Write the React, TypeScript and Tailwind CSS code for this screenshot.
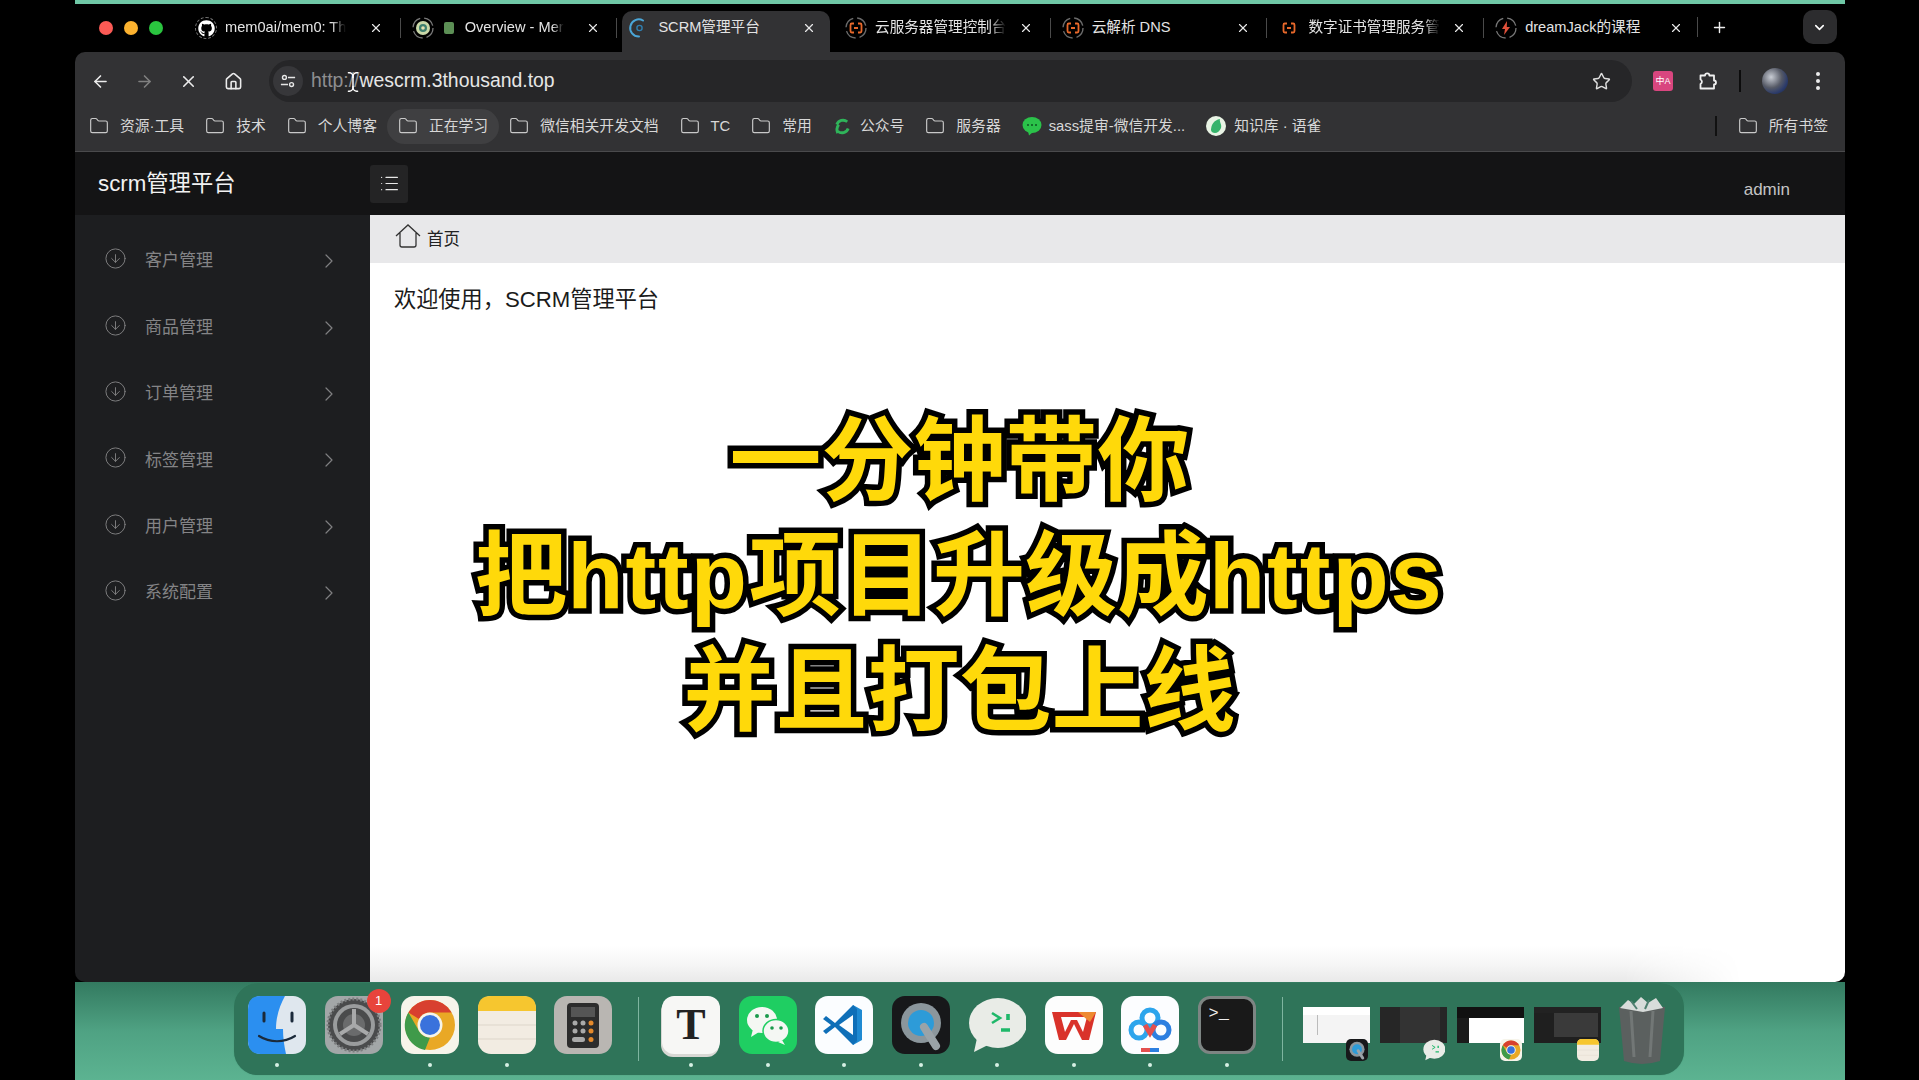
import {
  ArrowLeft,
  ArrowRight,
  ChevronDown,
  ChevronRight,
  CircleArrowDown,
  Folder,
  Home,
  List,
  Plus,
  Star,
  TextCursor,
  X,
} from 'lucide-react';
import { FaGithub } from 'react-icons/fa';

function AliIcon({ ring = true }: { ring?: boolean }) {
  return (
    <svg viewBox="0 0 22 22" className="w-[22px] h-[22px]" fill="none">
      {ring && <circle cx="11" cy="11" r="10" stroke="#6b6b6b" strokeWidth="1.4" strokeDasharray="12 4" />}
      <path d="M9 6.5H6.8Q5.5 6.5 5.5 8v6q0 1.5 1.3 1.5H9M13 6.5h2.2q1.3 0 1.3 1.5v6q0 1.5-1.3 1.5H13M9 11h4" stroke="#e8682a" strokeWidth="1.8" />
    </svg>
  );
}

function GithubFav() {
  return (
    <span className="relative flex w-[22px] h-[22px] items-center justify-center rounded-full border border-dashed border-[#777]">
      <FaGithub className="w-[17px] h-[17px] text-white" />
    </span>
  );
}

function OverviewFav() {
  return (
    <svg viewBox="0 0 22 22" className="w-[22px] h-[22px]" fill="none">
      <circle cx="11" cy="11" r="10" stroke="#777" strokeWidth="1.3" strokeDasharray="12 4" />
      <circle cx="11" cy="11" r="7" fill="#c9d8a8" />
      <circle cx="11" cy="11" r="4" fill="#3d7f6e" />
      <circle cx="11" cy="11" r="1.8" fill="#e6e2b0" />
    </svg>
  );
}

function ScrmFav() {
  return (
    <svg viewBox="0 0 22 22" className="w-[22px] h-[22px]" fill="none">
      <path d="M15 3.5A8.6 8.6 0 1 0 11 19.6" stroke="#4aa6d8" strokeWidth="2" strokeLinecap="round" />
      <circle cx="11.5" cy="11" r="2.6" stroke="#2f7fb0" strokeWidth="1.4" />
    </svg>
  );
}

function JackFav() {
  return (
    <svg viewBox="0 0 22 22" className="w-[22px] h-[22px]" fill="none">
      <circle cx="11" cy="11" r="10" stroke="#777" strokeWidth="1.3" strokeDasharray="12 4" />
      <path d="M12 4 7 12h3l-1 6 6-8h-3.2z" fill="#e0503a" />
    </svg>
  );
}

const tabs = [
  { title: 'mem0ai/mem0: Th', icon: <GithubFav />, fade: true },
  { title: 'Overview - Mer', icon: <OverviewFav />, emoji: true, fade: true },
  { title: 'SCRM管理平台', icon: <ScrmFav />, active: true },
  { title: '云服务器管理控制台', icon: <AliIcon />, fade: true },
  { title: '云解析 DNS', icon: <AliIcon /> },
  { title: '数字证书管理服务管', icon: <AliIcon ring={false} />, fade: true },
  { title: 'dreamJack的课程', icon: <JackFav />, last: true },
];

const bookmarks = ['资源·工具', '技术', '个人博客', '正在学习', '微信相关开发文档', 'TC', '常用'];
const menus = ['客户管理', '商品管理', '订单管理', '标签管理', '用户管理', '系统配置'];

function Bookmark({ label, active }: { label: string; active?: boolean }) {
  return (
    <div className={`flex h-[35px] items-center gap-[11px] rounded-full ${active ? 'bg-[#3f3f41] -mx-[11px] px-[11px]' : ''}`}>
      <Folder className="w-[20px] h-[20px] text-[#c9c9c9]" strokeWidth={1.4} />
      <span className="whitespace-nowrap text-[14.8px] text-[#d8d8d8]">{label}</span>
    </div>
  );
}

function FinderIcon() {
  return (
    <svg viewBox="0 0 58 58" className="w-full h-full">
      <rect width="58" height="58" rx="13" fill="#dfe7ee" />
      <path d="M13 0h24c-5 9-9 20-9 33h7c0 8 1 16 3 25H13Q0 58 0 45V13Q0 0 13 0z" fill="#2b8ff0" />
      <path d="M16 17v8M44 17v8" stroke="#1b2a3a" strokeWidth="3" strokeLinecap="round" />
      <path d="M11 40c11 7 25 7 36 0" fill="none" stroke="#1b2a3a" strokeWidth="2.2" strokeLinecap="round" />
    </svg>
  );
}

function SettingsIcon() {
  return (
    <svg viewBox="0 0 58 58" className="w-full h-full">
      <rect width="58" height="58" rx="13" fill="#a3a7a8" />
      <circle cx="29" cy="29" r="26" fill="#4a4b4c" />
      <circle cx="29" cy="29" r="26" fill="none" stroke="#7c7e7f" strokeWidth="3" strokeDasharray="2 2" />
      <circle cx="29" cy="29" r="21" fill="#9a9c9d" />
      <circle cx="29" cy="29" r="17" fill="#4a4b4c" />
      <circle cx="29" cy="29" r="11" fill="#6a6b6c" />
      <path d="M29 29V13M29 29 15 38M29 29l14 9" stroke="#a8a9aa" strokeWidth="4" />
    </svg>
  );
}

function ChromeIcon() {
  return (
    <svg viewBox="0 0 58 58" className="w-full h-full">
      <rect width="58" height="58" rx="13" fill="#f6f4ea" />
      <circle cx="29" cy="29" r="25" fill="#e9a825" />
      <path d="M29 4a25 25 0 0 1 21.6 12.5H29A12.5 12.5 0 0 0 18 23L7.400 16.500A25 25 0 0 1 29 4z" fill="#d8402f" />
      <path d="M7.400 16.500 18 35a12.500 12.500 0 0 0 11 6.500L24 54A25 25 0 0 1 7.400 16.500z" fill="#3f9a4a" />
      <circle cx="29" cy="29" r="12.500" fill="#f6f4ea" />
      <circle cx="29" cy="29" r="10" fill="#3a72dc" />
    </svg>
  );
}

function NotesIcon() {
  return (
    <svg viewBox="0 0 58 58" className="w-full h-full">
      <rect width="58" height="58" rx="13" fill="#f2ece2" />
      <path d="M0 15V13Q0 0 13 0h32q13 0 13 13v2z" fill="#f6c62f" />
      <path d="M0 29h58M0 43h58" stroke="#ddd6ca" strokeWidth="1" />
    </svg>
  );
}

function CalcIcon() {
  const keys = [0, 1, 2];
  return (
    <svg viewBox="0 0 58 58" className="w-full h-full">
      <rect width="58" height="58" rx="13" fill="#b9b6b2" />
      <rect x="13" y="7" width="32" height="45" rx="4" fill="#2c2c2c" />
      <rect x="17" y="11" width="24" height="10" fill="#555" />
      {keys.map((k) => (
        <g key={k}>
          <circle cx={21 + k * 8} cy="27" r="2.500" fill={k === 2 ? '#e58a2c' : '#aaa'} />
          <circle cx={21 + k * 8} cy="35" r="2.500" fill={k === 2 ? '#e58a2c' : '#aaa'} />
        </g>
      ))}
      <rect x="18" y="41" width="13" height="5" rx="2.500" fill="#aaa" />
      <circle cx="37" cy="43.500" r="2.500" fill="#e58a2c" />
    </svg>
  );
}

function WechatIcon() {
  return (
    <svg viewBox="0 0 58 58" className="w-full h-full">
      <rect width="58" height="58" rx="13" fill="#1fce62" />
      <ellipse cx="23" cy="24" rx="15" ry="13" fill="#f4f7f3" />
      <path d="M14 33 12 41l8-5z" fill="#f4f7f3" />
      <ellipse cx="37" cy="35" rx="13" ry="11.500" fill="#f4f7f3" stroke="#1fce62" strokeWidth="1.500" />
      <path d="M43 44l3 5-7-3z" fill="#f4f7f3" />
      <circle cx="18" cy="20" r="2" fill="#1a9a4c" />
      <circle cx="28" cy="20" r="2" fill="#1a9a4c" />
      <circle cx="33" cy="32" r="1.800" fill="#1a9a4c" />
      <circle cx="42" cy="32" r="1.800" fill="#1a9a4c" />
    </svg>
  );
}

function VscodeIcon() {
  return (
    <svg viewBox="0 0 58 58" className="w-full h-full">
      <rect width="58" height="58" rx="13" fill="#fbfdff" />
      <path d="M38 9 47 14v30l-9 5V9z" fill="#1f8ad2" />
      <path d="M38 9 20 27 11 20l-3 3 8 6-8 6 3 3 9-7 18 18 4-4V13z" fill="#0f6fb8" />
      <path d="M38 19v20L24 29z" fill="#fbfdff" />
    </svg>
  );
}

function QuicktimeIcon() {
  return (
    <svg viewBox="0 0 58 58" className="w-full h-full">
      <rect width="58" height="58" rx="13" fill="#17181a" />
      <circle cx="29" cy="27" r="20" fill="#8b969c" />
      <circle cx="29" cy="27" r="13" fill="#2d9bd8" />
      <path d="M32 31 44 50" stroke="#9aa3a8" strokeWidth="8" strokeLinecap="round" />
    </svg>
  );
}

function ChatIcon() {
  return (
    <svg viewBox="0 0 58 58" className="w-full h-full">
      <ellipse cx="30" cy="27" rx="29" ry="25" fill="#e9ece7" />
      <path d="M9 42 6 56l16-8z" fill="#e9ece7" />
      <path d="M24 17l8 5-8 5" fill="none" stroke="#1fb86a" strokeWidth="2.600" />
      <path d="M40 18v6M33 34h9" stroke="#1fb86a" strokeWidth="3.600" />
    </svg>
  );
}

function WpsIcon() {
  return (
    <svg viewBox="0 0 58 58" className="w-full h-full">
      <rect width="58" height="58" rx="13" fill="#fdfdfd" />
      <path d="M7 16h44l-7 28h-7l-8-16-8 16h-7z" fill="#d9322a" />
      <path d="M16 21h26l-4 15-6-12h-6l-6 12z" fill="#fdfdfd" />
      <path d="M33 16h18l-6 10z" fill="#ee8a30" />
    </svg>
  );
}

function BaiduIcon() {
  return (
    <svg viewBox="0 0 58 58" className="w-full h-full">
      <rect width="58" height="58" rx="13" fill="#fcfdff" />
      <circle cx="29" cy="22" r="8" fill="none" stroke="#2da5ec" strokeWidth="5" />
      <circle cx="18" cy="34" r="8" fill="none" stroke="#2da5ec" strokeWidth="5" />
      <circle cx="40" cy="34" r="8" fill="none" stroke="#2d7fe0" strokeWidth="5" />
      <path d="M24 29l5 8 5-8" fill="none" stroke="#e4504f" strokeWidth="5" />
      <rect x="20" y="52" width="9" height="4" fill="#e4504f" />
      <rect x="29" y="52" width="9" height="4" fill="#2d7fe0" />
    </svg>
  );
}

function TrashIcon() {
  return (
    <svg viewBox="0 0 54 70" className="w-full h-full">
      <path d="M4 12h46l-5 54q-18 6-36 0z" fill="#5b605f" />
      <path d="M16 16l3 46M38 16l-3 46" stroke="#727776" strokeWidth="3" />
      <path d="M5 13l8-8 6 4 7-7 7 6 8-5 7 10-20 4z" fill="#d8dcda" />
      <path d="M16 6l6 8M34 5l-4 9" stroke="#4f7f70" strokeWidth="2" />
    </svg>
  );
}

function DockApp({ running = true, children }: { running?: boolean; children: React.ReactNode }) {
  return (
    <div className="relative h-[58px] w-[58px] shrink-0">
      {children}
      {running && <span className="absolute left-[27px] top-[67px] h-[4px] w-[4px] rounded-full bg-[#d6f0e4]" />}
    </div>
  );
}

function Thumb({ top, left, badge, children }: { top: string; left: string; badge: React.ReactNode; children?: React.ReactNode }) {
  return (
    <div className="relative h-[50px] w-[67px] shrink-0">
      <div className={`h-[36px] w-full overflow-hidden ${top}`}>
        <div className={`h-full ${left}`}>{children}</div>
      </div>
      <div className="absolute right-[2px] top-[29px] h-[28px] w-[22px]">{badge}</div>
    </div>
  );
}

export default function App() {
  return (
    <div className="relative flex h-[1080px] w-[1919px] overflow-hidden bg-black [font-family:'Liberation_Sans','Noto_Sans_CJK_SC',sans-serif]">
      <div className="ml-[75px] flex w-[1770px] flex-col">
        <div className="h-[4px] shrink-0 bg-[#6fc7a6]" />

        {/* browser window */}
        <div className="relative z-10 flex h-[978px] shrink-0 flex-col overflow-hidden rounded-[10px] bg-black">
          {/* tabs */}
          <div className="flex h-[48px] shrink-0 items-end pl-[24px]">
            <div className="mb-[17px] flex gap-[11px]">
              <span className="h-[14px] w-[14px] rounded-full bg-[#fb5a55]" />
              <span className="h-[14px] w-[14px] rounded-full bg-[#fcb22f]" />
              <span className="h-[14px] w-[14px] rounded-full bg-[#2ac43f]" />
            </div>
            <div className="ml-[26px] flex">
              {tabs.map((tab) => (
                <div
                  key={tab.title}
                  className={`relative flex h-[41px] shrink-0 items-center pb-[7px] pl-[6px] ${tab.active ? 'mr-[9px] w-[207.7px] rounded-t-[10px] bg-[#323234]' : 'w-[216.7px]'}`}
                >
                  <div className="flex h-[22px] w-[22px] shrink-0 items-center justify-center">{tab.icon}</div>
                  {tab.emoji && <span className="ml-[10px] h-[12px] w-[10px] shrink-0 rounded-[2px] bg-[#5c8f55]" />}
                  <span
                    className={`${tab.emoji ? 'ml-[11px]' : 'ml-[8px]'} whitespace-nowrap text-[14.6px] text-[#e4e4e4] ${tab.fade ? '[mask-image:linear-gradient(to_right,black_88%,transparent)]' : ''}`}
                  >
                    {tab.title}
                  </span>
                  <X className="absolute left-[180px] top-[10px] h-[14px] w-[14px] text-[#e8e8e8]" strokeWidth={2} />
                  {!tab.active && !tab.last && <span className="absolute right-[5px] top-[7px] h-[20px] w-px bg-[#4a4a4a]" />}
                </div>
              ))}
            </div>
            <div className="mb-[9px] flex h-[32px] items-center">
              <span className="-ml-[9px] h-[20px] w-px bg-[#4a4a4a]" />
              <Plus className="ml-[13px] h-[17px] w-[17px] text-[#eee]" strokeWidth={2} />
              <div className="ml-[75px] flex h-[34px] w-[34px] items-center justify-center rounded-[10px] bg-[#2c2c2e]">
                <ChevronDown className="h-[15px] w-[15px] text-white" strokeWidth={2.5} />
              </div>
            </div>
          </div>

          {/* toolbar */}
          <div className="flex h-[58px] shrink-0 items-center rounded-t-[10px] bg-[#323234] pl-[16px]">
            <ArrowLeft className="h-[19px] w-[19px] text-[#ececec]" strokeWidth={2} />
            <ArrowRight className="ml-[25px] h-[19px] w-[19px] text-[#808080]" strokeWidth={2} />
            <X className="ml-[25px] h-[19px] w-[19px] text-[#ececec]" strokeWidth={2} />
            <Home className="ml-[26px] h-[19px] w-[19px] text-[#ececec]" strokeWidth={2} />
            <div className="ml-[26px] flex h-[42px] w-[1363px] items-center rounded-full bg-[#262628] pl-[4px]">
              <div className="flex h-[30px] w-[30px] items-center justify-center rounded-full bg-[#37373a]">
                <svg viewBox="0 0 18 18" className="h-[16px] w-[16px]" fill="none" stroke="#e6e6e6" strokeWidth="1.6">
                  <circle cx="5" cy="5" r="2.200" />
                  <path d="M9 5h8M1 13h8" />
                  <circle cx="13" cy="13" r="2.200" />
                </svg>
              </div>
              <span className="ml-[8px] text-[19.4px] text-[#8e8e90]">http://</span>
              <span className="text-[19.4px] text-[#e6e6e6]">wescrm.3thousand.top</span>
              <Star className="ml-auto mr-[21px] h-[19px] w-[19px] text-[#dedede]" strokeWidth={1.8} />
            </div>
            <div className="ml-[21px] flex h-[20px] w-[20px] items-center justify-center rounded-[3px] bg-[#d9467f] text-[9px] leading-none text-white">
              中A
            </div>
            <svg viewBox="0 0 20 20" className="ml-[25px] h-[20px] w-[20px]" fill="none" stroke="#f0f0f0" strokeWidth="1.8" strokeLinejoin="round">
              <path d="M2.500 4.500H7a2.200 2.200 0 0 1 4.400 0H16v5a2 2 0 0 1 0 4v4H2.500v-4.500a2.500 2.500 0 0 0 0-4.500z" />
            </svg>
            <span className="ml-[21px] h-[22px] w-[2px] bg-[#0c0c0c]" />
            <div className="ml-[21px] h-[26px] w-[26px] rounded-full bg-[radial-gradient(circle_at_35%_35%,#c8ccd4,#565a66_45%,#2a3a6a_70%,#1e2430)]" />
            <div className="ml-[28px] flex flex-col gap-[3px]">
              <span className="h-[4px] w-[4px] rounded-full bg-[#ececec]" />
              <span className="h-[4px] w-[4px] rounded-full bg-[#ececec]" />
              <span className="h-[4px] w-[4px] rounded-full bg-[#ececec]" />
            </div>
          </div>

          {/* bookmarks */}
          <div className="flex h-[42px] shrink-0 items-center gap-[21px] border-b border-[#4a4a4c] bg-[#323234] pb-[9px] pl-[14px] pr-[17px]">
            {bookmarks.map((b) => (
              <Bookmark key={b} label={b} active={b === '正在学习'} />
            ))}
            <div className="flex items-center gap-[8px]">
              <svg viewBox="0 0 20 20" className="h-[19px] w-[19px]" fill="none" stroke="#2fb45a" strokeWidth="3">
                <path d="M4 8a7 7 0 0 1 11-3M16 12a7 7 0 0 1-11 3M5 17a9 9 0 0 1 1-9" />
              </svg>
              <span className="text-[14.8px] text-[#d8d8d8]">公众号</span>
            </div>
            <Bookmark label="服务器" />
            <div className="flex items-center gap-[7px]">
              <svg viewBox="0 0 20 20" className="h-[20px] w-[20px]">
                <ellipse cx="10" cy="9" rx="9.500" ry="8" fill="#2bc24a" />
                <path d="M6 15 7 19.500 11 16z" fill="#2bc24a" />
                <circle cx="6" cy="9" r="1.100" fill="#0e5c24" />
                <circle cx="10" cy="9" r="1.100" fill="#0e5c24" />
                <circle cx="14" cy="9" r="1.100" fill="#0e5c24" />
              </svg>
              <span className="whitespace-nowrap text-[14.8px] text-[#d8d8d8]">sass提审-微信开发...</span>
            </div>
            <div className="flex items-center gap-[8px]">
              <svg viewBox="0 0 20 20" className="h-[20px] w-[20px]">
                <circle cx="10" cy="10" r="10" fill="#e8f3e4" />
                <path d="M5 14c0-5 3-10 9-11-1 3 2 5 1 9-1 3-4 5-6 5-2 0-4-1-4-3z" fill="#35b36b" />
              </svg>
              <span className="whitespace-nowrap text-[14.8px] text-[#d8d8d8]">知识库 · 语雀</span>
            </div>
            <span className="ml-auto h-[20px] w-[2px] bg-[#111]" />
            <Bookmark label="所有书签" />
          </div>

          {/* app header */}
          <div className="flex h-[63px] shrink-0 items-center bg-[#141415]">
            <div className="w-[295px] shrink-0 pl-[23px] text-[22.3px] text-[#f2f2f2]">scrm管理平台</div>
            <div className="flex h-[38px] w-[38px] items-center justify-center rounded-[3px] bg-[#242425]">
              <List className="h-[21px] w-[21px] text-[#e8e8e8]" strokeWidth={1.4} />
            </div>
            <span className="ml-auto mr-[55px] mt-[12px] text-[17px] text-[#c4c4c4]">admin</span>
          </div>

          <div className="flex min-h-0 flex-1">
            {/* sidebar */}
            <div className="flex w-[295px] shrink-0 flex-col bg-[#1d1e20] pt-[13px]">
              {menus.map((m) => (
                <div key={m} className="flex h-[66.4px] shrink-0 items-center pl-[29px]">
                  <CircleArrowDown className="-mt-[5px] h-[23px] w-[23px] text-[#7f7f81]" strokeWidth={1} />
                  <span className="ml-[18px] text-[17px] text-[#848486]">{m}</span>
                  <ChevronRight className="ml-[104px] h-[24px] w-[24px] text-[#7f7f81]" strokeWidth={1.2} />
                </div>
              ))}
            </div>

            {/* content */}
            <div className="flex min-w-0 flex-1 flex-col bg-white">
              <div className="flex h-[48px] shrink-0 items-center bg-[#e8e8ea] pl-[25px]">
                <svg viewBox="0 0 26 24" className="-mt-[6px] h-[24px] w-[26px]" fill="none" stroke="#333" strokeWidth="1.300">
                  <path d="M1 12 13 1l12 11M5 9v12q0 2 2 2h12q2 0 2-2V9" />
                </svg>
                <span className="ml-[6px] text-[16.500px] text-[#222]">首页</span>
              </div>
              <div className="pl-[24px] pt-[22px] text-[22.2px] leading-[30px] text-[#1b1b1b]">欢迎使用，SCRM管理平台</div>
              <div className="mt-auto h-[36px] bg-gradient-to-b from-white via-[#f6f6f6] to-[#e9e9e9] [mask-image:linear-gradient(to_right,black_85%,transparent_93%)]" />
            </div>
          </div>
        </div>

        {/* dock */}
        <div className="flex flex-1 bg-gradient-to-b from-[#337a60] via-[#4fa283] via-50% to-[#5cb391] pl-[159px]">
          <div className="mt-[1px] flex h-[92px] w-[1450px] items-start rounded-[24px] bg-[#2f7459] pl-[14px] pt-[13px] shadow-[0_0_1px_#3d8a6c]">
            <div className="flex items-center gap-[18.5px]">
              <DockApp>
                <FinderIcon />
              </DockApp>
              <DockApp running={false}>
                <SettingsIcon />
                <span className="absolute -right-[8px] -top-[7px] flex h-[24px] w-[24px] items-center justify-center rounded-full bg-[#e8443c] text-[13px] text-white">1</span>
              </DockApp>
              <DockApp>
                <ChromeIcon />
              </DockApp>
              <DockApp>
                <NotesIcon />
              </DockApp>
              <DockApp running={false}>
                <CalcIcon />
              </DockApp>
            </div>
            <span className="ml-[26px] mt-[1px] h-[64px] w-px bg-[#7fb5a0]" />
            <div className="ml-[23px] flex items-center gap-[18.5px]">
              <DockApp>
                <div className="flex h-full w-full items-center justify-center rounded-[12px] bg-[#f7f7f5] text-[44px] font-bold text-[#222] shadow-[-1px_3px_0_#d8d8d4] [font-family:'Liberation_Serif',serif]">
                  T
                </div>
              </DockApp>
              <DockApp>
                <WechatIcon />
              </DockApp>
              <DockApp>
                <VscodeIcon />
              </DockApp>
              <DockApp>
                <QuicktimeIcon />
              </DockApp>
              <DockApp>
                <ChatIcon />
              </DockApp>
              <DockApp>
                <WpsIcon />
              </DockApp>
              <DockApp>
                <BaiduIcon />
              </DockApp>
              <DockApp>
                <div className="h-full w-full rounded-[12px] border-[3px] border-[#7d8583] bg-[#191919] pl-[8px] pt-[6px] text-[17px] leading-none text-[#eee] [font-family:'Liberation_Mono',monospace]">
                  &gt;_
                </div>
              </DockApp>
            </div>
            <span className="ml-[26px] mt-[1px] h-[64px] w-px bg-[#7fb5a0]" />
            <div className="ml-[20px] mt-[11px] flex gap-[10px]">
              <Thumb top="bg-white" left="bg-[#f4f4f4]" badge={<QuicktimeIcon />}>
                <div className="ml-[14px] mt-[8px] h-[20px] w-[30px] border-l border-[#bbb]" />
              </Thumb>
              <Thumb top="bg-[#1d1d1d]" left="bg-[#262626]" badge={<ChatIcon />}>
                <div className="ml-[20px] h-full w-[40px] bg-[#333]" />
              </Thumb>
              <Thumb top="bg-[#111]" left="bg-[#1b1b1b]" badge={<ChromeIcon />}>
                <div className="ml-[12px] mt-[11px] h-full bg-white" />
              </Thumb>
              <Thumb top="bg-[#222]" left="bg-[#1f1f1f]" badge={<NotesIcon />}>
                <div className="ml-[20px] mt-[6px] h-[24px] w-[44px] bg-[#3a3a3a]" />
              </Thumb>
            </div>
            <div className="ml-[14px] -mt-[1px] h-[70px] w-[54px] shrink-0">
              <TrashIcon />
            </div>
          </div>
        </div>
      </div>

      {/* cursor over the address bar */}
      <TextCursor className="absolute left-[342px] top-[71px] z-20 h-[22px] w-[22px] text-white" strokeWidth={1.6} />

      {/* video caption laid over the page */}
      <div className="absolute inset-x-0 top-[404px] z-20 text-center text-[92px] font-bold leading-[115px] text-[#ffd90a] [-webkit-text-stroke:11px_#000] [paint-order:stroke_fill] [text-shadow:1px_3px_0_#000]">
        <div>一分钟带你</div>
        <div>
          把<span className="tracking-[2px]">http</span>项目升级成<span className="tracking-[2px]">https</span>
        </div>
        <div>并且打包上线</div>
      </div>
    </div>
  );
}
